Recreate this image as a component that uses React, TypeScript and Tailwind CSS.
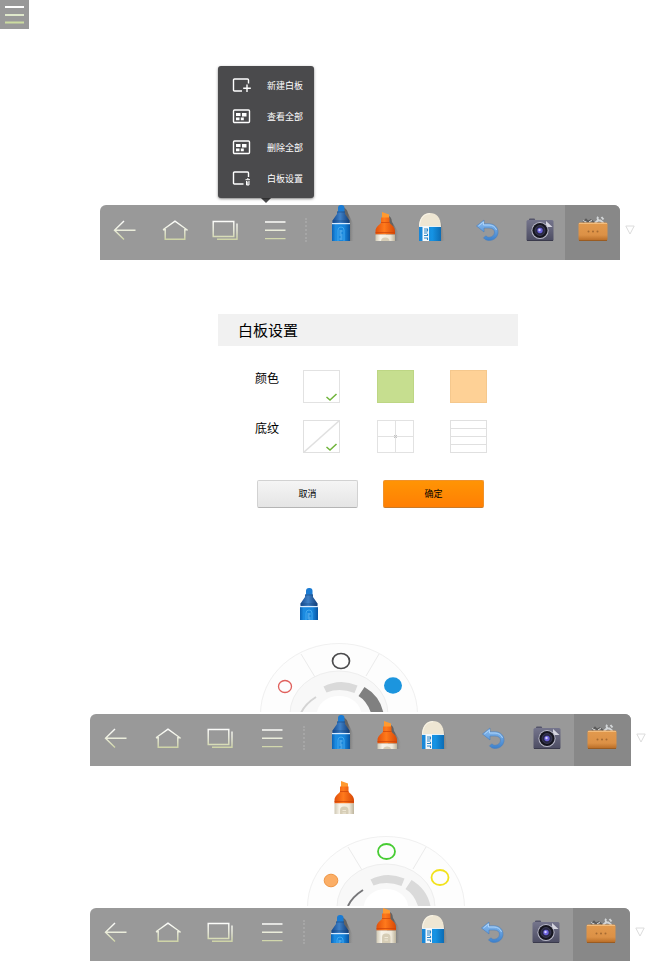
import type { ReactNode } from "react";

/* Gradients shared by all the drawings on the page */
function SharedDefs() {
  return (
    <svg className="absolute h-0 w-0" aria-hidden="true">
      <defs>
        <linearGradient id="line" gradientUnits="userSpaceOnUse" x1="0" y1="0" x2="0" y2="20">
          <stop offset="0" stopColor="#ffffff" />
          <stop offset="0.5" stopColor="#eceedd" />
          <stop offset="1" stopColor="#cdd3a4" />
        </linearGradient>
        <linearGradient id="blueBody" x1="0" x2="1">
          <stop offset="0" stopColor="#0b62b4" />
          <stop offset="0.2" stopColor="#1c8ce2" />
          <stop offset="0.7" stopColor="#1683da" />
          <stop offset="1" stopColor="#0853a0" />
        </linearGradient>
        <linearGradient id="blueNeck" x1="0" x2="1">
          <stop offset="0" stopColor="#164a8e" />
          <stop offset="0.45" stopColor="#3f80c6" />
          <stop offset="1" stopColor="#123d78" />
        </linearGradient>
        <linearGradient id="orangeNeck" x1="0" x2="1">
          <stop offset="0" stopColor="#e2500a" />
          <stop offset="0.45" stopColor="#ff7a1c" />
          <stop offset="1" stopColor="#d84806" />
        </linearGradient>
        <linearGradient id="cream" x1="0" x2="1">
          <stop offset="0" stopColor="#cfc8b4" />
          <stop offset="0.25" stopColor="#f7f3e8" />
          <stop offset="0.75" stopColor="#efe9da" />
          <stop offset="1" stopColor="#bdb49c" />
        </linearGradient>
        <linearGradient id="sleeve" x1="0" x2="1">
          <stop offset="0" stopColor="#1a86d6" />
          <stop offset="0.6" stopColor="#1593e4" />
          <stop offset="1" stopColor="#0c6cb4" />
        </linearGradient>
        <linearGradient id="shade" x1="0" x2="1">
          <stop offset="0.5" stopColor="#4c4c4c" stopOpacity="0.7" />
          <stop offset="1" stopColor="#888" stopOpacity="0" />
        </linearGradient>
        <linearGradient id="undo" x1="0" y1="0" x2="0" y2="1">
          <stop offset="0" stopColor="#8fc0f2" />
          <stop offset="1" stopColor="#3b80cc" />
        </linearGradient>
        <linearGradient id="camera" x1="0" y1="0" x2="0" y2="1">
          <stop offset="0" stopColor="#75758c" />
          <stop offset="1" stopColor="#4c4c62" />
        </linearGradient>
        <linearGradient id="box" x1="0" y1="0" x2="0" y2="1">
          <stop offset="0" stopColor="#e29a4e" />
          <stop offset="0.7" stopColor="#dc9146" />
          <stop offset="1" stopColor="#b86c26" />
        </linearGradient>
      </defs>
    </svg>
  );
}

function LineIcon({ children }: { children: ReactNode }) {
  return (
    <svg viewBox="0 0 26 20" className="h-5 w-[26px]" fill="none" stroke="url(#line)" strokeWidth="1.4" aria-hidden="true">
      {children}
    </svg>
  );
}

const BackIcon = () => (
  <LineIcon>
    <path d="M12 1 2.500 10.200 12 19.500M2.500 10.200H23.500" />
  </LineIcon>
);
const HomeIcon = () => (
  <LineIcon>
    <path d="M1 9.800 13 1.200 25 9.800H22.800V19.200H3.200V9.800H1" />
  </LineIcon>
);
const WindowsIcon = () => (
  <LineIcon>
    <path d="M1.200 1.500H21.800V16.500H1.200ZM25 3.500V19.300H5" />
  </LineIcon>
);
const ListIcon = () => (
  <LineIcon>
    <path d="M3 2H23.500M3 10.300H23.500M3 18.600H23.500" />
  </LineIcon>
);

type MarkerProps = { crop: number; shadow?: boolean };

function BlueMarker({ crop, shadow = false }: MarkerProps) {
  return (
    <svg viewBox={`0 0 28 ${crop}`} width="28" height={crop} aria-hidden="true">
      {shadow && <path d="M15 2Q20 3 21 8L27 20V40H15V20Z" fill="url(#shade)" />}
      <rect x="11" y="0" width="6.500" height="9" rx="3" fill="#1a7bd3" />
      <path d="M10 6.500H18V9L22.500 15.500V19H5.500V15.500L10 9Z" fill="url(#blueNeck)" />
      <path d="M10 7H18M5.500 16H22.500" stroke="#16477f" strokeWidth=".6" />
      <rect x="5" y="18" width="18" height="26" fill="url(#blueBody)" />
      <rect x="5" y="18" width="18" height="1.200" fill="#d8ecff" />
      <rect x="11" y="22" width="6" height="22" rx="3" fill="none" stroke="#4db1f2" strokeWidth=".8" />
      <path d="M12.500 26h3M12.500 28h2M12.500 30h3M13.500 32h2M12.500 34h3" stroke="#8fd0fa" strokeWidth=".8" />
    </svg>
  );
}

function OrangeMarker({ crop, shadow = false }: MarkerProps) {
  return (
    <svg viewBox={`0 0 28 ${crop}`} width="28" height={crop} aria-hidden="true">
      {shadow && <path d="M15 3Q21 4 21 10L28 21V40H15V20Z" fill="url(#shade)" />}
      <path d="M11 0 18 2.500V6H11Z" fill="#ff9a30" />
      <path d="M10 5.500H18.500V10.500C20 13 24 14.500 24 19V22.500H4.500V19C4.500 14.500 9 13 10 10.500Z" fill="url(#orangeNeck)" />
      <path d="M10 10.500H18.500M4.500 20.500H24" stroke="#cb430a" strokeWidth=".7" />
      <rect x="4.500" y="22.500" width="19.500" height="24" fill="url(#cream)" />
      <rect x="10" y="25.500" width="8.500" height="20" rx="4" fill="#d6cdb6" />
      <path d="M12.500 29.500h3.500M12.500 32h3.500" stroke="#efe8d6" />
    </svg>
  );
}

function EraserDrawing() {
  return (
    <svg viewBox="0 0 30 28" className="h-7 w-[30px]" aria-hidden="true">
      <path d="M16 2Q26 4 27 13L30 28H16V13Z" fill="url(#shade)" />
      <path d="M4 14C4 4 9 0 15 0S26 4 26 14Z" fill="#eee6d3" />
      <path d="M4.500 13C5 5 9 .7 15 .7" fill="none" stroke="#faf6ea" />
      <rect x="4" y="13.500" width="22" height="14.500" fill="url(#sleeve)" />
      <rect x="7.500" y="13.500" width="6.500" height="14.500" fill="#f4f8fb" />
      <path d="M9 16h3.500v2H9M9 20h3.500M9 22.500h3.500v-1.500M9 25h3.500v2" fill="none" stroke="#2a86c8" strokeWidth="1.100" />
      <path d="M4 13.500H26" stroke="#fff" strokeWidth=".8" />
    </svg>
  );
}

function UndoDrawing() {
  return (
    <svg viewBox="0 0 26 24" className="h-6 w-[26px]" aria-hidden="true">
      <path d="M2.500 8 10 2V5.800H15C20.500 5.800 24 9.500 24 14S20.500 22.500 15 22.500C12.500 22.500 10.500 21.300 9.500 19.800L12 17.800C13 19 14 19.300 15 19.300C18.300 19.300 20.500 17 20.500 14.300S18.500 10 15 10H10V14Z" fill="url(#undo)" stroke="#4a80be" strokeWidth=".6" />
      <path d="M4.500 8 9.500 4V7H15C18.500 7 21.500 9 22.500 12" fill="none" stroke="#b9dafb" strokeWidth=".8" />
    </svg>
  );
}

function CameraDrawing() {
  return (
    <svg viewBox="0 0 28 24" className="h-6 w-7" aria-hidden="true">
      <rect x="3" y="0.500" width="6" height="3" rx="1" fill="#55556b" />
      <rect x=".5" y="2" width="27" height="21" rx="1.500" fill="url(#camera)" />
      <path d="M1 22.500H27" stroke="#3a3a4c" />
      <path d="M20 3 26.500 9H20Z" fill="#d6d6e0" />
      <circle cx="14" cy="12.500" r="8.600" fill="#b9b9c8" />
      <circle cx="14" cy="12.500" r="7.600" fill="#15151f" />
      <circle cx="14" cy="12.500" r="5" fill="#292945" stroke="#44445e" strokeWidth=".7" />
      <circle cx="14" cy="12.500" r="2.700" fill="#6c62dc" />
      <circle cx="13.500" cy="12" r="1.200" fill="#d5d0ff" />
    </svg>
  );
}

function ToolboxDrawing() {
  return (
    <svg viewBox="0 0 30 28" className="h-7 w-[30px]" aria-hidden="true">
      <path d="M5 6.500 8 3.500 10 5.500 13 4 16 6.500" fill="none" stroke="#5a5a5a" strokeWidth="1.600" />
      <path d="M5 4.500 8 6M11 6 14 4" stroke="#d8d8d8" />
      <path d="M17 7 21 3.500M20 .8C18.500 3 20.500 5 22.500 4.500L25.500 7M23.500 1 25.500 3.500" fill="none" stroke="#d3d6d8" strokeWidth="2" />
      <rect x=".5" y="6.500" width="29" height="18" rx="1.500" fill="url(#box)" />
      <path d="M1 7.500H29" stroke="#f2bc7c" />
      <path d="M1 24.500H29" stroke="#9a5c22" />
      <g fill="#a56a32">
        <circle cx="10.500" cy="15.500" r="1" />
        <circle cx="15" cy="15.500" r="1" />
        <circle cx="19.500" cy="15.500" r="1" />
      </g>
    </svg>
  );
}

type BarProps = {
  frame: string;
  height: string;
  iconRow: string;
  markerRow: string;
  blueCrop: number;
  orangeCrop: number;
};

function Toolbar({ frame, height, iconRow, markerRow, blueCrop, orangeCrop }: BarProps) {
  const cell = `flex w-full items-center justify-center ${iconRow}`;
  const marker = `flex w-full items-end justify-center ${markerRow}`;
  return (
    <div className={`flex ${frame}`}>
      <div
        role="toolbar"
        className={`grid min-w-0 flex-1 grid-cols-[50fr_50fr_50fr_50fr_12fr_58fr_30fr_60fr_54fr_51fr_55fr] items-start overflow-hidden rounded-t-md bg-[#999] ${height}`}
      >
        <button aria-label="返回" className={cell}><BackIcon /></button>
        <button aria-label="主页" className={cell}><HomeIcon /></button>
        <button aria-label="窗口" className={cell}><WindowsIcon /></button>
        <button aria-label="菜单" className={cell}><ListIcon /></button>
        <div className={cell}>
          <div className="h-6 border-l-2 border-dotted border-[#a6a6a6]" />
        </div>
        <button aria-label="笔" className={marker}><BlueMarker crop={blueCrop} shadow /></button>
        <button aria-label="荧光笔" className={marker}><OrangeMarker crop={orangeCrop} shadow /></button>
        <button aria-label="橡皮" className={marker}><EraserDrawing /></button>
        <button aria-label="撤销" className={cell}><UndoDrawing /></button>
        <button aria-label="截图" className={cell}><CameraDrawing /></button>
        <button aria-label="工具箱" className={`flex items-start bg-[#888] ${height}`}>
          <span className={cell}><ToolboxDrawing /></span>
        </button>
      </div>
      <button aria-label="收起" className={`flex w-5 shrink-0 items-center justify-center ${iconRow}`}>
        <svg viewBox="0 0 10 10" className="h-[10px] w-[10px]" fill="none" stroke="#dcdcdc" aria-hidden="true">
          <path d="M.8 1H9.200L5 9Z" />
        </svg>
      </button>
    </div>
  );
}

type MenuIconKind = "new" | "grid" | "settings";

function MenuIcon({ kind }: { kind: MenuIconKind }) {
  return (
    <svg viewBox="0 0 19 15" className="h-[15px] w-[19px]" fill="none" stroke="#fff" strokeWidth="1.400" aria-hidden="true">
      {kind === "grid" && (
        <>
          <rect x="1.500" y="1" width="16" height="12.500" rx="1" />
          <path d="M4 4h4.500v3H4zM10 4h4.500v3.500H10zM4 8.500h3.500v2.800H4zM8.800 8.500h3v2.800h-3z" fill="#fff" stroke="none" />
        </>
      )}
      {kind === "new" && <path d="M10 13H2.500Q1.500 13 1.500 12V2Q1.500 1 2.500 1H15.500Q16.500 1 16.500 2V5.500M15 6.500V14M11.200 10.200H18.800" />}
      {kind === "settings" && (
        <>
          <path d="M11.500 13H2.500Q1.500 13 1.500 12V2Q1.500 1 2.500 1H15.500Q16.500 1 16.500 2V6" />
          <path d="M13.500 8.700H18M14.500 10V14H17V10M15.800 10.500V14M15 7.800H16.500" strokeWidth="1" />
        </>
      )}
    </svg>
  );
}

const menuItems: { label: string; kind: MenuIconKind }[] = [
  { label: "新建白板", kind: "new" },
  { label: "查看全部", kind: "grid" },
  { label: "删除全部", kind: "grid" },
  { label: "白板设置", kind: "settings" },
];

function BoardMenu() {
  return (
    <div className="relative ml-[218px] w-24">
      <div className="absolute -bottom-[3px] left-[43px] h-[10px] w-[10px] rotate-45 bg-[#4a4a4c]" />
      <ul className="relative rounded-[3px] bg-[#4a4a4c] py-1 shadow-sm shadow-black/40">
        {menuItems.map((item) => (
          <li key={item.label}>
            <button className="flex h-[31px] w-full items-center gap-4 pl-[14px] text-[9px] text-white">
              <MenuIcon kind={item.kind} />
              {item.label}
            </button>
          </li>
        ))}
      </ul>
    </div>
  );
}

type Swatch = { name: string; art: ReactNode };

const colours: Swatch[] = [
  { name: "白色", art: <rect x=".5" y=".5" width="36" height="32" fill="#fff" stroke="#e2e2e2" /> },
  { name: "绿色", art: <rect x=".5" y=".5" width="36" height="32" fill="#c6de8f" stroke="#bdd684" /> },
  { name: "橙色", art: <rect x=".5" y=".5" width="36" height="32" fill="#fed196" stroke="#f5c88d" /> },
];

const patterns: Swatch[] = [
  {
    name: "无",
    art: (
      <g fill="none" stroke="#e0e0e0">
        <rect x=".5" y=".5" width="36" height="32" />
        <path d="M.5 32.500 36.500.5" strokeWidth="1.500" />
      </g>
    ),
  },
  {
    name: "方格",
    art: (
      <g fill="none" stroke="#e2e2e2">
        <rect x=".5" y=".5" width="36" height="32" />
        <path d="M18.500.5V32.500M.5 16.500H36.500" />
        <path d="M17 15 20 18M20 15 17 18" stroke="#c4c4c4" />
      </g>
    ),
  },
  {
    name: "横线",
    art: (
      <g fill="none" stroke="#e0e0e0">
        <rect x=".5" y=".5" width="36" height="32" />
        <path d="M.5 8.500H36.500M.5 16.500H36.500M.5 24.500H36.500" />
      </g>
    ),
  },
];

function SwatchRow({ label, group, options }: { label: string; group: string; options: Swatch[] }) {
  return (
    <div role="radiogroup" aria-labelledby={group} className="flex">
      <span id={group} className="w-12 text-xs leading-4">{label}</span>
      <div className="flex w-[184px] justify-between">
        {options.map((option, index) => (
          <label key={option.name} className="block">
            <input type="radio" name={group} aria-label={option.name} defaultChecked={index === 0} className="peer sr-only" />
            <svg viewBox="0 0 37 33" className="h-[33px] w-[37px] peer-checked:[&_.tick]:opacity-100" aria-hidden="true">
              {option.art}
              <path className="tick opacity-0" d="M23.500 27 27 30 33.500 24" fill="none" stroke="#6fb43a" strokeWidth="1.500" />
            </svg>
          </label>
        ))}
      </div>
    </div>
  );
}

function SettingsDialog() {
  return (
    <section aria-labelledby="dialog-title" className="ml-[218px] mt-[54px] w-[300px] text-black">
      <h2 id="dialog-title" className="bg-[#f1f1f1] pl-5 text-[15px] leading-8">白板设置</h2>
      <div className="flex flex-col gap-[17px] pl-[37px] pt-6">
        <SwatchRow label="颜色" group="colour" options={colours} />
        <SwatchRow label="底纹" group="pattern" options={patterns} />
      </div>
      <div className="mt-[27px] flex gap-[25px] pl-[39px] text-[9px]">
        <button className="h-7 w-[101px] rounded-xs border border-[#d2d2d2] border-b-[#b5b5b5] bg-linear-to-b from-[#f5f5f5] to-[#e5e5e5]">取消</button>
        <button className="h-7 w-[101px] rounded-xs border border-[#f0922a] border-b-[#c97a2a] bg-linear-to-b from-[#ff9404] to-[#ff7f04]">确定</button>
      </div>
    </section>
  );
}

type DialProps = { children: ReactNode; thin: string; thinWidth: number; thick: string };

/* Half-round picker: colours on the outer ring, stroke widths on the inner one */
function Dial({ children, thin, thinWidth, thick }: DialProps) {
  return (
    <svg viewBox="0 0 158 70" className="h-[70px] w-[158px]" fill="none" aria-hidden="true">
      <ellipse cx="79" cy="71" rx="78.500" ry="70.500" fill="#fdfdfd" stroke="#f0f0f0" />
      <path d="M41 11 55 34M119 11 106 33" stroke="#ebebeb" />
      <ellipse cx="79" cy="71" rx="49" ry="43" fill="#f8f8f8" stroke="#eeeeee" />
      <ellipse cx="79" cy="71" rx="22" ry="18" fill="#fff" />
      <path d="M63.500 43.500Q80 35 97.500 42.500L94.500 50Q80 44.500 66.500 49.500Z" fill="#dadada" />
      <path d="M104.500 44Q120 53 123.500 70H111Q107 58 98.500 53Z" fill={thick} />
      <path d="M41 70Q45 61 56 54" stroke={thin} strokeWidth={thinWidth} />
      {children}
    </svg>
  );
}

export default function App() {
  return (
    <main className="overflow-hidden bg-white font-['Noto_Sans_CJK_SC',sans-serif]">
      <SharedDefs />
      <button aria-label="菜单" className="flex h-[29px] w-[29px] items-center justify-center bg-[#999]">
        <svg viewBox="0 0 19 19" className="h-[19px] w-[19px]" strokeWidth="2" aria-hidden="true">
          <path d="M0 2H19" stroke="#fff" />
          <path d="M0 10H19" stroke="#dfe8cb" />
          <path d="M0 17.500H19" stroke="#ccdca0" />
        </svg>
      </button>

      <div className="mt-[37px]">
        <BoardMenu />
      </div>
      <Toolbar frame="mt-[7px] pl-[100px] pr-[15px]" height="h-[55px]" iconRow="h-[50px]" markerRow="h-9" blueCrop={36} orangeCrop={29} />

      <SettingsDialog />

      <div className="ml-[295px] mt-20 flex h-8">
        <BlueMarker crop={32} />
      </div>
      <div className="ml-[260px] mt-[23px] h-[69px] overflow-hidden">
        <Dial thin="#d4d4d4" thinWidth={2} thick="#808080">
          <ellipse cx="25" cy="43.500" rx="6.500" ry="6" stroke="#e0605c" strokeWidth="1.300" />
          <ellipse cx="81" cy="18" rx="8.500" ry="7.500" stroke="#4b4b4d" strokeWidth="1.700" />
          <ellipse cx="133" cy="42.500" rx="9" ry="8.200" fill="#1c95de" />
        </Dial>
      </div>
      <Toolbar frame="mt-[2px] pl-[90px] pr-1" height="h-[52px]" iconRow="h-[48px]" markerRow="h-[35px]" blueCrop={34} orangeCrop={28} />

      <div className="ml-[330px] mt-[15px] flex h-[33px]">
        <OrangeMarker crop={33} />
      </div>
      <div className="ml-[307px] mt-[22px] h-[70px]">
        <Dial thin="#77777a" thinWidth={2} thick="#dadada">
          <ellipse cx="24" cy="44.500" rx="6.800" ry="6.300" fill="#fbae66" stroke="#ef9645" />
          <ellipse cx="79.500" cy="15.500" rx="8.500" ry="7.500" stroke="#47cc33" strokeWidth="1.800" />
          <ellipse cx="133" cy="41.500" rx="8.500" ry="7.500" stroke="#f2e21d" strokeWidth="1.800" />
        </Dial>
      </div>
      <Toolbar frame="mt-[2px] pl-[90px] pr-[5px]" height="h-[53px]" iconRow="h-[48px]" markerRow="h-[35px]" blueCrop={28} orangeCrop={35} />
    </main>
  );
}
